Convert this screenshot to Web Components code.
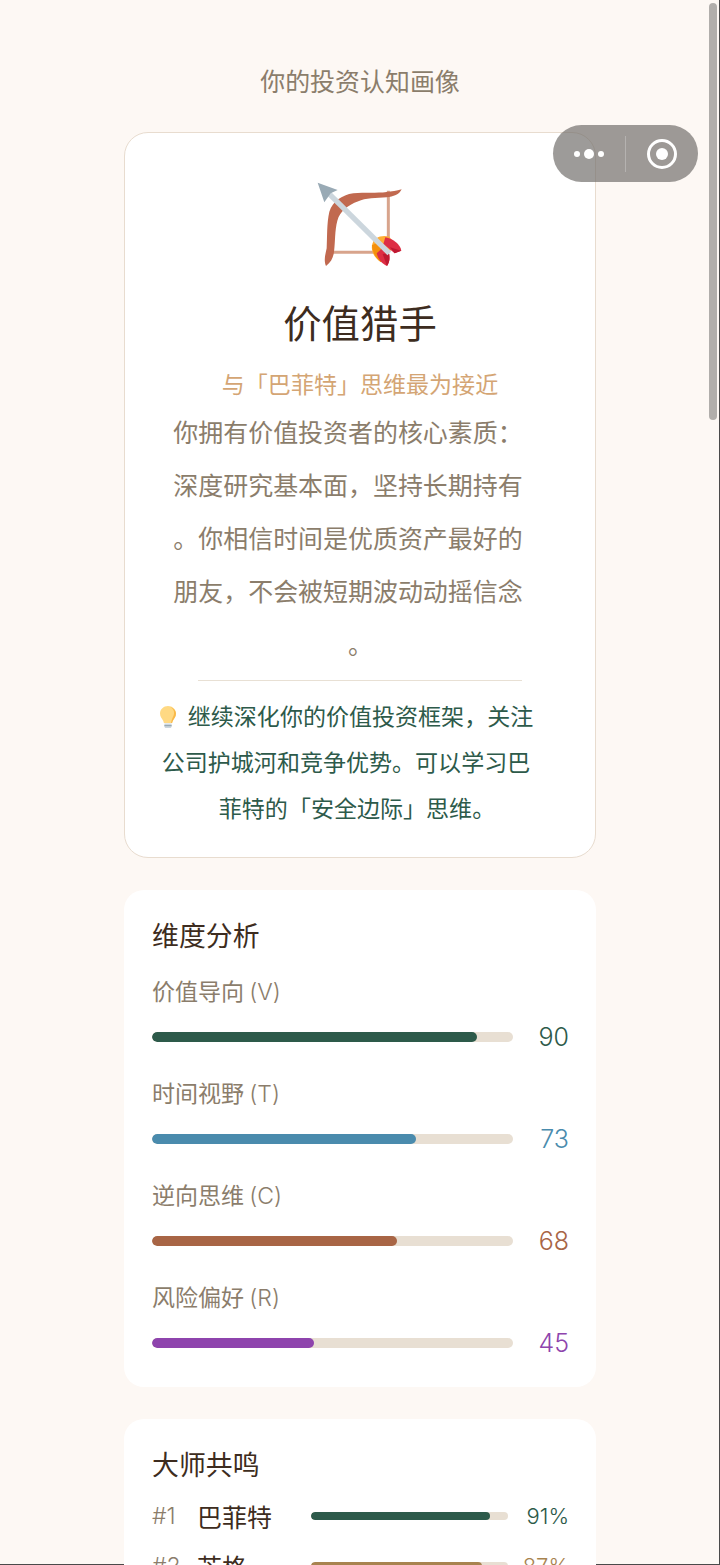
<!doctype html>
<html lang="zh">
<head>
<meta charset="utf-8">
<style>
  html, body { margin: 0; height: 1565px; overflow: hidden; }
  body { background: #fdf8f4; font-family: "Noto Sans CJK SC", sans-serif; }
</style>
</head>
<body>
<profile-page></profile-page>
<template id="bow">
  <svg viewBox="0 0 390 330" width="130" height="110">
    <path fill="none" stroke="#d8a48c" stroke-width="9" d="M295 62V210M110 247H258"/>
    <path fill="#c1694f" d="M335 58C328 74 310 80 290 82C260 84 225 84 205 94C172 106 150 124 142 152C134 182 136 215 132 245C130 262 124 276 108 288C100 270 107 250 110 235C112 200 110 160 118 125C128 95 155 75 190 70C225 66 260 70 290 66C305 65 320 62 335 58Z"/>
    <path fill="#ffac33" d="M246 226C250 204 272 194 298 200L316 225L272 276C254 264 243 246 246 226Z"/>
    <path fill="#f4900c" d="M246 226C247 246 256 264 272 276L285 255L262 218Z"/>
    <path fill="#dd2e44" d="M286 202C310 206 331 224 334 242L314 250L280 222Z"/>
    <path fill="#be1931" d="M300 232L334 242L314 250Z"/>
    <path fill="#dd2e44" d="M260 250C264 266 274 280 291 288C299 276 300 265 297 250L275 236Z"/>
    <path fill="#be1931" d="M278 252L291 288C299 276 300 265 297 250Z"/>
    <path fill="none" stroke="#ccd6dd" stroke-width="16" d="M116 70L298 250"/>
    <path fill="#99aab5" d="M83 38L143 60L122 70L103 97Z"/>
  </svg>
</template>
<script>
class MiniCapsule extends HTMLElement {
  constructor() {
    super();
    this.attachShadow({ mode: "open" }).innerHTML = `
      <style>
        :host { position: absolute; left: 553px; top: 125px; width: 145px; height: 57px; z-index: 5;
          display: flex; align-items: center; box-sizing: border-box; border-radius: 29px;
          background: rgba(110, 108, 105, .68); }
        .more { width: 72px; display: flex; justify-content: center; align-items: center; gap: 4px; }
        i { display: block; border-radius: 50%; background: #fff; width: 6px; height: 6px; }
        i.big { width: 10px; height: 10px; }
        b { width: 1px; height: 36px; background: rgba(255,255,255,.25); }
        .rec { flex: 1; display: flex; justify-content: center; }
        .rec span { box-sizing: border-box; width: 30px; height: 30px; border: 3px solid #fff; border-radius: 50%;
          display: flex; align-items: center; justify-content: center; }
        .rec span::after { content: ""; width: 12px; height: 12px; border-radius: 50%; background: #fff; }
      </style>
      <div class="more"><i></i><i class="big"></i><i></i></div><b></b>
      <div class="rec"><span></span></div>`;
  }
}
class ScrollThumb extends HTMLElement {
  constructor() {
    super();
    this.attachShadow({ mode: "open" }).innerHTML = `
      <style>
        :host { position: absolute; left: 709px; top: 3px; width: 8px; height: 417px; z-index: 6;
          border-radius: 4px; background: #b1aeab; }
      </style>`;
  }
}
class ResultCard extends HTMLElement {
  constructor() {
    super();
    this.attachShadow({ mode: "open" }).innerHTML = `
      <style>
        :host { display: flex; flex-direction: column; align-items: center; box-sizing: border-box; flex: none;
          width: 472px; height: 726px; padding-top: 37px; background: #fff;
          border: 1px solid #e8dccf; border-radius: 24px; }
        .icon { height: 110px; margin-right: 10px; }
        .icon svg { display: block; }
        h2 { margin: 11px 0 0; font-weight: inherit; font-size: 38.4px; line-height: 60px; color: #3d2c20; }
        .sub { margin-top: 15px; font-size: 23.04px; line-height: 34px; color: #d4a574; }
        .desc { align-self: flex-start; box-sizing: border-box; width: 360px; margin: 5px 0 0 43px;
          text-align: center; font-size: 24.96px; line-height: 53px; color: #8b7d6b; line-break: anywhere; }
        .desc span { display: inline-block; margin-left: 25px; }
        hr { width: 324px; height: 1px; margin: 10px 0 0; border: 0; background: #e8e0d4; }
        .tip { align-self: flex-start; width: 380px; margin: 11px 0 0 31px; text-align: center;
          font-size: 23.04px; line-height: 46px; color: #2d5a4a; line-break: anywhere; }
        .tip svg { display: inline-block; vertical-align: -4px; margin-right: 11px; }
        .tip span { margin-left: 22px; }
      </style>
      <div class="icon"></div>
      <h2>价值猎手</h2>
      <div class="sub">与「巴菲特」思维最为接近</div>
      <div class="desc">你拥有价值投资者的核心素质：深度研究基本面，坚持长期持有。你相信时间是优质资产最好的朋友，不会被短期波动动摇信念<span>。</span></div>
      <hr>
      <div class="tip"><svg viewBox="0 0 18 24" width="18" height="24">
        <path fill="#ffd983" d="M9 1c-4.400 0-8 3.300-8 7.600 0 3.200 2 4.900 3 6.900.6 1.200.7 2 .9 2.500h8.200c.2-.5.300-1.300.9-2.500 1-2 3-3.700 3-6.900C17 4.300 13.400 1 9 1z"/>
        <path fill="#f9b949" d="M11 2c3 1.300 4.500 4 4 7-.4 2.600-2.500 5-3 9h1.100c.2-.5.300-1.300.9-2.500 1-2 3-3.700 3-6.900C17 5.800 14.500 2.900 11 2z"/>
        <path fill="#ccd6dd" d="M5.400 18.500h7.200v3c0 .8-.7 1.500-1.500 1.500H6.900c-.8 0-1.500-.7-1.500-1.500z"/>
        <path fill="#99aab5" d="M5.400 20h7.200v1.200H5.400z"/>
      </svg>继续深化你的价值投资框架，关注公司护城河和竞争优势。可以学习巴<span>菲特的「安全边际」思维。</span></div>`;
    this.shadowRoot.querySelector(".icon").append(document.getElementById("bow").content.cloneNode(true));
  }
}
class PanelCard extends HTMLElement {
  constructor() {
    super();
    this.attachShadow({ mode: "open" }).innerHTML = `
      <style>
        :host { display: block; box-sizing: border-box; width: 472px; padding: 26px 27px 14px 28px; background: #fff; border-radius: 20px; }
        h3 { margin: 0 0 var(--title-gap, 11px); font-weight: inherit; font-size: 26.88px; line-height: 38px; color: #3d2c20; }
      </style>
      <h3><slot name="title"></slot></h3>
      <slot></slot>`;
  }
}
class DimensionRow extends HTMLElement {
  connectedCallback() {
    if (this.shadowRoot) return;
    const value = this.getAttribute("value"), color = this.getAttribute("color");
    this.attachShadow({ mode: "open" }).innerHTML = `
      <style>
        :host { display: block; height: 102px; }
        .label { padding-top: 8px; font-size: 23.04px; line-height: 34px; color: #8b7d6b; }
        .label span { font-family: "Inter", sans-serif; font-weight: 300; }
        .line { display: flex; align-items: center; margin-top: 11px; height: 34px; }
        .track { width: 361px; height: 10px; border-radius: 5px; background: #e8dfd3; overflow: hidden; }
        .fill { height: 100%; width: ${value}%; border-radius: 5px; background: ${color}; }
        .value { flex: 1; text-align: right; font: 300 25px "Inter", sans-serif; color: ${color}; }
      </style>
      <div class="label">${this.getAttribute("label")} <span>(${this.getAttribute("code")})</span></div>
      <div class="line"><div class="track"><div class="fill"></div></div><div class="value">${value}</div></div>`;
  }
}
class MasterRow extends HTMLElement {
  connectedCallback() {
    if (this.shadowRoot) return;
    const value = this.getAttribute("value"), color = this.getAttribute("color");
    this.attachShadow({ mode: "open" }).innerHTML = `
      <style>
        :host { display: flex; align-items: center; height: 50px; }
        .rank { width: 45px; font: 300 23.04px "Inter", sans-serif; color: #8b7d6b; }
        .name { width: 114px; font-size: 24.96px; color: #3d2c20; }
        .track { width: 197px; height: 8px; border-radius: 4px; background: #e8dfd3; overflow: hidden; }
        .fill { height: 100%; width: ${value}%; border-radius: 4px; background: ${color}; }
        .value { flex: 1; text-align: right; font: 300 22px "Inter", sans-serif; color: ${color}; }
      </style>
      <span class="rank">${this.getAttribute("rank")}</span>
      <span class="name">${this.getAttribute("name")}</span>
      <div class="track"><div class="fill"></div></div>
      <span class="value">${value}%</span>`;
  }
}
class ProfilePage extends HTMLElement {
  constructor() {
    super();
    this.attachShadow({ mode: "open" }).innerHTML = `
      <style>
        :host { display: flex; flex-direction: column; align-items: center; position: relative;
          box-sizing: border-box; width: 720px; height: 1565px; overflow: hidden;
          box-shadow: inset -1px -1px 0 #4a4a4a; font-weight: 400;
          font-family: "Noto Sans CJK SC", sans-serif; }
        .head { margin-top: 62px; font-size: 24.96px; line-height: 36px; color: #8b7d6b; }
        result-card { margin-top: 34px; }
        panel-card { margin-top: 32px; flex: none; }
        .masters { --title-gap: 8px; }
      </style>
      <div class="head">你的投资认知画像</div>
      <result-card></result-card>
      <panel-card>
        <span slot="title">维度分析</span>
        <dimension-row label="价值导向" code="V" value="90" color="#2d5a4a"></dimension-row>
        <dimension-row label="时间视野" code="T" value="73" color="#4a8bad"></dimension-row>
        <dimension-row label="逆向思维" code="C" value="68" color="#a86545"></dimension-row>
        <dimension-row label="风险偏好" code="R" value="45" color="#8e44ad"></dimension-row>
      </panel-card>
      <panel-card class="masters">
        <span slot="title">大师共鸣</span>
        <master-row rank="#1" name="巴菲特" value="91" color="#2d5a4a"></master-row>
        <master-row rank="#2" name="芒格" value="87" color="#a8834f"></master-row>
      </panel-card>
      <mini-capsule></mini-capsule>
      <scroll-thumb></scroll-thumb>`;
  }
}
customElements.define("mini-capsule", MiniCapsule);
customElements.define("scroll-thumb", ScrollThumb);
customElements.define("result-card", ResultCard);
customElements.define("panel-card", PanelCard);
customElements.define("dimension-row", DimensionRow);
customElements.define("master-row", MasterRow);
customElements.define("profile-page", ProfilePage);
</script>
</body>
</html>
